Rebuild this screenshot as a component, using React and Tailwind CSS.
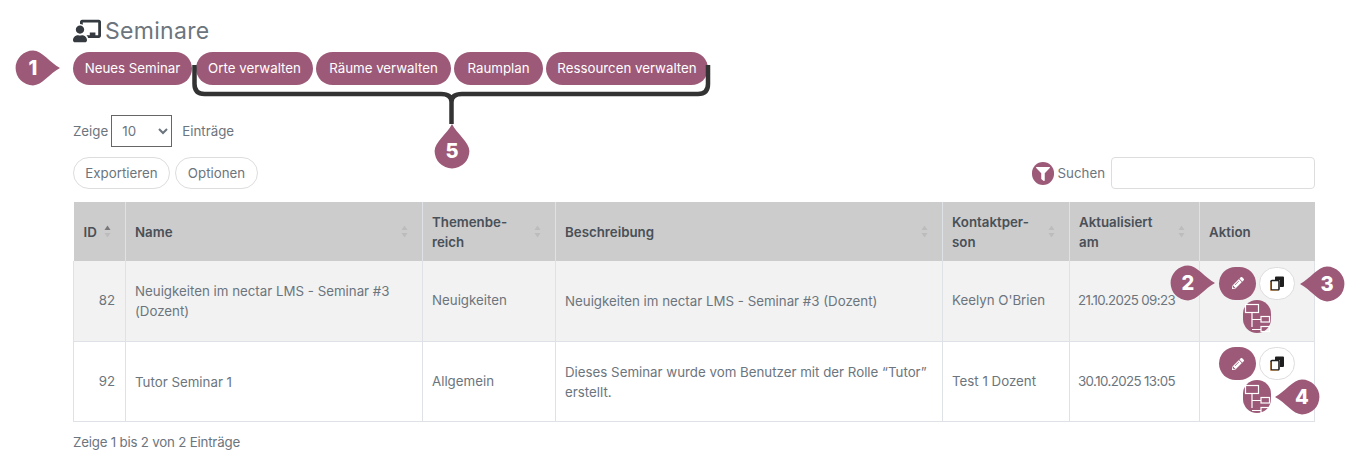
import { FaChalkboardTeacher, FaFilter, FaPencilAlt } from 'react-icons/fa';

const plum = '#9c5a78';

const rows = [
  {
    id: 82,
    name: 'Neuigkeiten im nectar LMS - Seminar #3 (Dozent)',
    topic: 'Neuigkeiten',
    desc: 'Neuigkeiten im nectar LMS - Seminar #3 (Dozent)',
    contact: "Keelyn O'Brien",
    updated: '21.10.2025 09:23',
    bg: 'bg-[#f2f2f2]',
  },
  {
    id: 92,
    name: 'Tutor Seminar 1',
    topic: 'Allgemein',
    desc: 'Dieses Seminar wurde vom Benutzer mit der Rolle “Tutor” erstellt.',
    contact: 'Test 1 Dozent',
    updated: '30.10.2025 13:05',
    bg: 'bg-white',
  },
];

const topButtons = [
  { label: 'Neues Seminar', cls: 'w-[119px]' },
  { label: 'Orte verwalten', cls: 'ml-[4px] w-[117px]' },
  { label: 'Räume verwalten', cls: 'ml-[3px] w-[135px]' },
  { label: 'Raumplan', cls: 'ml-[3px] w-[89px]' },
  { label: 'Ressourcen verwalten', cls: 'ml-[3px] w-[162px]' },
];

function SortArrows({ active }) {
  return (
    <svg width="7" height="13" viewBox="0 0 7 13" className="mr-[4px] shrink-0">
      <path d="M3.5 0.5 L6.5 5 L0.5 5 Z" fill={active ? '#777777' : '#bcbcbc'} />
      <path d="M3.5 12.5 L6.5 8 L0.5 8 Z" fill="#bcbcbc" />
    </svg>
  );
}

function Th({ children, sort = true, active, className = 'pl-[9px]' }) {
  return (
    <th className={`border-r border-[#dee2e6] py-0 pr-[10px] text-left font-semibold ${className}`}>
      <div className="flex items-center justify-between">
        <span className="leading-[20px]">{children}</span>
        {sort && <SortArrows active={active} />}
      </div>
    </th>
  );
}

function TreeIcon() {
  return (
    <svg width="28" height="32" viewBox="0 0 28 32" className="block">
      <rect x="2.5" y="4.5" width="13" height="8" fill="none" stroke="white" strokeWidth="1.2" />
      <path d="M9 12.5 V27 M9 19.5 H18 M9 29.5 H18" fill="none" stroke="white" strokeWidth="1.2" />
      <rect x="18" y="16.5" width="8.5" height="5.5" fill="none" stroke="white" strokeWidth="1.2" />
      <rect x="18" y="26.5" width="8.5" height="5" fill="none" stroke="white" strokeWidth="1.2" />
    </svg>
  );
}

function CopyIcon() {
  return (
    <svg width="15" height="15" viewBox="0 0 15 15">
      <path d="M5 1.5 Q5 0.5 6 0.5 H13 Q14 0.5 14 1.5 V10 Q14 11 13 11 H10 V5 Q10 4 9 4 H5 Z" fill="#1f1f1f" />
      <rect x="1" y="4.5" width="8" height="9.5" rx="1" fill="white" stroke="#1f1f1f" strokeWidth="1.6" />
      <path d="M0.4 6 V14.6 H8" fill="none" stroke="#c98a4b" strokeWidth="0.7" />
    </svg>
  );
}

function Actions() {
  return (
    <div className="flex flex-wrap justify-center pb-[2px]">
      <button className="flex h-[33px] w-[37px] items-center justify-center rounded-full bg-[#9c5a78] text-white">
        <FaPencilAlt size={12} />
      </button>
      <button className="ml-[3px] flex h-[33px] w-[36px] items-center justify-center rounded-full border border-[#dddddd] bg-white">
        <CopyIcon />
      </button>
      <div className="basis-full" />
      <button className="flex h-[33px] w-[28px] items-center justify-center rounded-full bg-[#9c5a78]">
        <TreeIcon />
      </button>
    </div>
  );
}

// teardrop marker, dir is the side the point looks at
function Callout({ n, x, y, dir }) {
  const rot = { right: 0, left: 180, up: -90 }[dir];
  return (
    <div className="absolute h-0 w-0" style={{ left: x, top: y }}>
      <svg
        width="60"
        height="40"
        viewBox="-20 -20 60 40"
        className="absolute left-[-20px] top-[-20px]"
        style={{ transform: `rotate(${rot}deg)`, transformOrigin: '20px 20px' }}
      >
        <path d="M0 -17.4 C 9 -17.4 17 -5 27 0 C 17 5 9 17.4 0 17.4 A 17.4 17.4 0 0 1 0 -17.4 Z" fill={plum} />
      </svg>
      <span className="absolute left-[-18px] top-[-14px] block w-[36px] text-center font-['Inter',sans-serif] text-[20px] font-extrabold leading-[28px] text-white">
        {n}
      </span>
    </div>
  );
}

export default function App() {
  return (
    <div className="relative h-[459px] overflow-hidden bg-white pl-[73px] pr-[53px] font-['Inter',sans-serif] text-[13.3px] text-[#6c757d]">
      <div className="flex h-[52px] items-center pt-[9px]">
        <FaChalkboardTeacher size={28} className="text-[#343a40]" />
        <h1 className="ml-[4px] pt-[2px] text-[23px] font-normal leading-none tracking-[0.3px]">Seminare</h1>
      </div>

      <div className="flex">
        {topButtons.map((b) => (
          <button key={b.label} className={`h-[33px] whitespace-nowrap rounded-[17px] bg-[#9c5a78] pt-[1px] text-white ${b.cls}`}>
            {b.label}
          </button>
        ))}
      </div>

      <div className="mt-[30px] flex items-center">
        <span className="pt-[1px]">Zeige</span>
        <select className="ml-[3px] h-[32px] w-[61px] border border-[#666666] bg-white pl-[6px] text-[13.3px]" defaultValue="10">
          <option>10</option>
        </select>
        <span className="ml-[10px] pt-[1px]">Einträge</span>
      </div>

      <div className="mt-[10px] flex h-[32px] items-center">
        <button className="h-[32px] w-[97px] rounded-[17px] border border-[#dddddd] pt-[1px]">Exportieren</button>
        <button className="ml-[5px] h-[32px] w-[83px] rounded-[17px] border border-[#dddddd] pt-[1px]">Optionen</button>
        <div className="ml-auto flex items-center">
          <span className="flex h-[23px] w-[22px] items-center justify-center rounded-full bg-[#9c5a78] pt-[1px] text-white">
            <FaFilter size={14} />
          </span>
          <span className="ml-[4px] pt-[1px]">Suchen</span>
          <input className="ml-[6px] h-[32px] w-[204px] rounded-[4px] border border-[#dddddd] bg-white" />
        </div>
      </div>

      <table className="mt-[13px] w-[1241px] table-fixed border-collapse">
        <colgroup>
          <col className="w-[52px]" />
          <col className="w-[297px]" />
          <col className="w-[133px]" />
          <col className="w-[387px]" />
          <col className="w-[127px]" />
          <col className="w-[130px]" />
          <col className="w-[115px]" />
        </colgroup>
        <thead>
          <tr className="h-[59px] bg-[#cccccc] text-[#495057]">
            <Th active className="pl-[10px]">
              ID
            </Th>
            <Th>Name</Th>
            <Th>
              Themenbe-
              <br />
              reich
            </Th>
            <Th>Beschreibung</Th>
            <Th>
              Kontaktper-
              <br />
              son
            </Th>
            <Th>
              Aktualisiert
              <br />
              am
            </Th>
            <Th sort={false} className="border-r-0 pl-[9px]">
              Aktion
            </Th>
          </tr>
        </thead>
        <tbody>
          {rows.map((r) => (
            <tr key={r.id} className={`h-[80px] border-b border-[#dee2e6] ${r.bg}`}>
              <td className="border-x border-[#dee2e6] px-[10px] pt-[1px] text-right">{r.id}</td>
              <td className="border-r border-[#dee2e6] pl-[9px] pr-[10px] pt-[1px] leading-[20px]">{r.name}</td>
              <td className="border-r border-[#dee2e6] pl-[9px] pr-[10px] pt-[1px]">{r.topic}</td>
              <td className="border-r border-[#dee2e6] pl-[9px] pr-[10px] pt-[1px] leading-[20px]">{r.desc}</td>
              <td className="border-r border-[#dee2e6] pl-[9px] pr-[10px] pt-[1px]">{r.contact}</td>
              <td className="whitespace-nowrap border-r border-[#dee2e6] pl-[8px] pr-[10px] pt-[1px] tracking-[-0.6px]">{r.updated}</td>
              <td className="border-r border-[#dee2e6] px-[10px]">
                <Actions />
              </td>
            </tr>
          ))}
        </tbody>
      </table>

      <p className="mt-[10px] leading-[20px] tracking-[-0.2px]">Zeige 1 bis 2 von 2 Einträge</p>

      <svg width="540" height="70" viewBox="0 0 540 70" className="absolute left-[185px] top-[60px]" fill="none">
        <path
          d="M9.5 5 V24 Q9.5 34 19.5 34 H256 Q266.5 34 266.5 42 V64 M266.5 42 Q266.5 34 277 34 H513 Q523 34 523 24 V5"
          stroke="#333333"
          strokeWidth="4.5"
          strokeLinecap="butt"
        />
      </svg>

      <Callout n="1" x={33} y={68} dir="right" />
      <Callout n="5" x={452} y={151} dir="up" />
      <Callout n="2" x={1188} y={283} dir="right" />
      <Callout n="3" x={1327} y={284} dir="left" />
      <Callout n="4" x={1302} y={397} dir="left" />
    </div>
  );
}
